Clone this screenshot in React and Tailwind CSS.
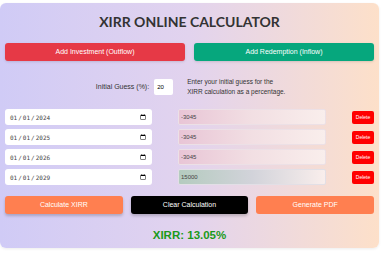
import React, { useState } from 'react';

const ROWS = [
    { date: '2024-01-01', amount: '-3045', type: 'out' },
    { date: '2025-01-01', amount: '-3045', type: 'out' },
    { date: '2026-01-01', amount: '-3045', type: 'out' },
    { date: '2029-01-01', amount: '15000', type: 'in' }
];

export default function App() {
    const [rows] = useState(ROWS);
    const [guess, setGuess] = useState('20');

    return (
        <div className="w-[381px] h-[255px] bg-white pt-[3px] font-['Liberation_Sans',Arial,sans-serif]">
            <div className="w-[379px] h-[245px] rounded-[6px] bg-gradient-to-r from-[#d0cbf6] via-[#e2d3ee] to-[#fde0c9] px-[5px] pt-[8px] shadow-[0_1px_3px_rgba(0,0,0,0.08)]">
                {/* Titulo */}
                <h1 className="text-center text-[14px] leading-[22px] font-bold text-[#333] font-['Lato',sans-serif]">
                    XIRR ONLINE CALCULATOR
                </h1>

                <div className="mt-[10px] flex gap-[9px]">
                    <button className="flex-1 h-[18px] rounded-[3px] bg-[#e63946] text-white text-[7px] shadow-sm">
                        Add Investment (Outflow)
                    </button>
                    <button className="flex-1 h-[18px] rounded-[3px] bg-[#06a77d] text-white text-[7px] shadow-sm">
                        Add Redemption (Inflow)
                    </button>
                </div>

                <div className="mt-[16px] flex items-center justify-center gap-[5px] pl-[4px]">
                    <label className="text-[7px] text-[#333]">Initial Guess (%):</label>
                    <input
                        value={guess}
                        onChange={(e) => setGuess(e.target.value)}
                        className="w-[16px] h-[16px] bg-white rounded-[2px] text-[6px] pl-[3px] outline-none box-content border-0"
                    />
                    <p className="ml-[9px] text-[6.5px] leading-[10px] text-[#333] w-[100px]">
                        Enter your initial guess for the XIRR calculation as a percentage.
                    </p>
                </div>

                <div className="mt-[12px] flex flex-col gap-[4px]">
                    {rows.map((r, i) => (
                        <div key={i} className="flex items-center">
                            <input
                                type="date"
                                defaultValue={r.date}
                                className="w-[147px] h-[16px] bg-white rounded-[3px] px-[4px] text-[6px] font-['DejaVu_Sans_Mono',monospace] text-[#444] outline-none"
                            />
                            <input
                                defaultValue={r.amount}
                                className={
                                    r.type === 'out'
                                        ? 'ml-[26px] w-[148px] h-[16px] rounded-[2px] border border-[#ece0e6] bg-gradient-to-r from-[#e8c5d6] via-[#f2dfe3] to-[#f9eeec] px-[2px] text-[6px] text-[#444] outline-none'
                                        : 'ml-[26px] w-[148px] h-[16px] rounded-[2px] border border-[#e2dfe6] bg-gradient-to-r from-[#b4cbbf] via-[#d2d3da] to-[#f9eeec] px-[2px] text-[6px] text-[#444] outline-none'
                                }
                            />
                            <button className="ml-[26px] w-[22px] h-[13px] rounded-[2px] bg-[#ff0000] text-white text-[5px] leading-none flex items-center justify-center">
                                Delete
                            </button>
                        </div>
                    ))}
                </div>

                <div className="mt-[11px] flex gap-[8px]">
                    <button className="flex-1 h-[18px] rounded-[3px] bg-[#ff7f50] text-white text-[7px] shadow-[0_2px_3px_rgba(0,0,0,0.2)]">
                        Calculate XIRR
                    </button>
                    <button className="flex-1 h-[18px] rounded-[3px] bg-black text-white text-[7px] shadow-[0_2px_3px_rgba(0,0,0,0.2)]">
                        Clear Calculation
                    </button>
                    <button className="flex-1 h-[18px] rounded-[3px] bg-[#ff7f50] text-white text-[7px]">
                        Generate PDF
                    </button>
                </div>

                <p className="mt-[14px] text-center text-[11.5px] leading-[14px] font-bold text-[#1a9a1a]">
                    XIRR: 13.05%
                </p>
            </div>
        </div>
    );
}
